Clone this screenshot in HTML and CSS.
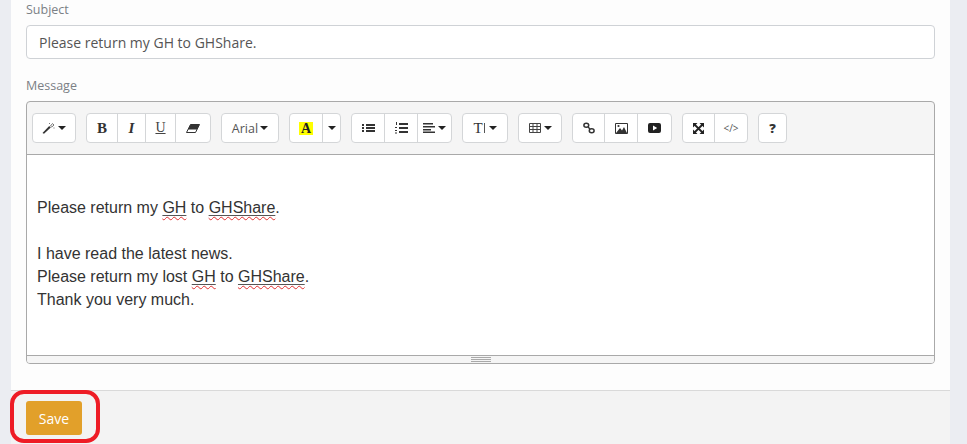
FILE: index.html
```html
<!DOCTYPE html>
<html lang="en">
<head>
<meta charset="utf-8">
<title>Message</title>
<link rel="stylesheet" href="styles.css">
</head>
<body>
<div class="card">
  <div class="card-body">
    <label class="label label-subject">Subject</label>
    <div class="input">Please return my GH to GHShare.</div>
    <label class="label label-message">Message</label>
    <div class="editor">
      <div class="toolbar">
        <div class="group"><button class="btn w42"><svg width="13" height="12" viewBox="0 0 13 12"><path d="M0.5 11 L7.200 4 L8.800 5.400 L2 11.800 Z" fill="#333"/><path d="M8.500 4 L10.500 1.500 L12 3 L9.800 5 Z" fill="none" stroke="#777" stroke-width="1"/><path d="M7 1h1v1H7zM11.500 5.500h1v1h-1z" fill="#777"/></svg><i class="caret"></i></button></div>
        <div class="group">
          <button class="btn w30 serif big bold">B</button>
          <button class="btn w28 serif big bolditalic">I</button>
          <button class="btn w30 serif under">U</button>
          <button class="btn w35"><svg width="14" height="9" viewBox="0 0 14 9"><path d="M4.500 0.500 L13.500 0.500 L9.500 8.500 L0.500 8.500 Z" fill="#fff" stroke="#333" stroke-width="1"/><path d="M4.500 0.500 L13.500 0.500 L11 5.500 L2 5.500 Z" fill="#333"/></svg></button>
        </div>
        <div class="group"><button class="btn w56 sans">Arial<i class="caret"></i></button></div>
        <div class="group">
          <button class="btn w32 serif bold"><span class="hilite">A</span></button>
          <button class="btn w18"><i class="caret"></i></button>
        </div>
        <div class="group">
          <button class="btn w32"><svg width="13" height="10" viewBox="0 0 13 10"><path d="M0 1h2v2H0zM0 4h2v2H0zM0 7h2v2H0zM4 1h9v2H4zM4 4h9v2H4zM4 7h9v2H4z" fill="#333"/></svg></button>
          <button class="btn w33"><svg width="13" height="12" viewBox="0 0 13 12"><path d="M1 0h1v3H1zM0 5h2v1H0zM0 8h2v1H0zM0 10.500h2v1H0zM4 1h9v2H4zM4 5h9v2H4zM4 9h9v2H4z" fill="#333"/></svg></button>
          <button class="btn w34"><svg width="12" height="10" viewBox="0 0 12 10"><path d="M0 0h10v1.500H0zM0 3h12v1.500H0zM0 6h8v1.500H0zM0 8.500h12V10H0z" fill="#333"/></svg><i class="caret"></i></button>
        </div>
        <div class="group"><button class="btn w44 serif size">T<span class="cursor"></span><i class="caret"></i></button></div>
        <div class="group"><button class="btn w42"><svg width="12" height="10" viewBox="0 0 12 10"><path d="M.5.500h11v9H.5zM.5 3.500h11M.5 6.500h11M4 .5v9M8 .5v9" fill="none" stroke="#444" stroke-width="1"/></svg><i class="caret"></i></button></div>
        <div class="group">
          <button class="btn w31"><svg width="12" height="12" viewBox="0 0 12 12"><g fill="none" stroke="#333" stroke-width="1.500"><ellipse cx="3.300" cy="3.300" rx="2.400" ry="2"/><ellipse cx="8.700" cy="8.700" rx="2.400" ry="2"/><path d="M5 5 L7 7"/></g></svg></button>
          <button class="btn w33"><svg width="13" height="11" viewBox="0 0 13 11"><path d="M.5.500h12v10H.5z" fill="#fff" stroke="#333"/><path d="M1 10 L5 5 L7 7.500 L9 4 L12 10 Z" fill="#333"/><circle cx="3.500" cy="3" r="1.100" fill="#333"/></svg></button>
          <button class="btn w34"><svg width="13" height="10" viewBox="0 0 13 10"><path d="M2 0H11Q13 0 13 2V8Q13 10 11 10H2Q0 10 0 8V2Q0 0 2 0ZM5 2.500V7.500L9.200 5Z" fill="#222" fill-rule="evenodd"/></svg></button>
        </div>
        <div class="group">
          <button class="btn w31"><svg width="11" height="11" viewBox="0 0 11 11"><path d="M1.500 1.500 L9.500 9.500 M9.500 1.500 L1.500 9.500" stroke="#222" stroke-width="1.800"/><path d="M0 0h4.500L0 4.500zM11 0v4.500L6.500 0zM0 11V6.500L4.500 11zM11 11H6.500L11 6.500z" fill="#222"/></svg></button>
          <button class="btn w33 code">&lt;/&gt;</button>
        </div>
        <div class="group"><button class="btn w27 help">?</button></div>
      </div>
      <div class="content">
        <p class="gap">Please return my <span class="misspelt"><span class="wavy">GH</span></span> to <span class="misspelt"><span class="wavy">GHShare</span></span>.</p>
        <p>I have read the latest news.</p>
        <p>Please return my lost <span class="misspelt"><span class="wavy">GH</span></span> to <span class="misspelt"><span class="wavy">GHShare</span></span>.</p>
        <p>Thank you very much.</p>
      </div>
      <div class="statusbar"><span class="grip"></span></div>
    </div>
  </div>
  <div class="card-footer"><button class="save">Save</button></div>
</div>
<div class="annotation"></div>
</body>
</html>
```
FILE: styles.css
```css
* { box-sizing: border-box; }
html, body { margin: 0; height: 444px; overflow: hidden; }
body { background: #ebedf2; font-family: "Open Sans", sans-serif; position: relative; }
.card { margin: 0 17px 0 11px; background: #fdfdfd; height: 444px; display: flex; flex-direction: column; }
.card-body { padding: 0 15px; height: 390px; flex: none; }
.label { display: block; font-size: 12.500px; line-height: 18px; padding-top: 1px; color: #7b8085; }
.label-subject { height: 25px; }
.label-message { margin-top: 17px; height: 25px; }
.input { height: 34px; border: 1px solid #cfd2d6; border-radius: 4px; background: #fff; padding: 0 12px; font-size: 14px; line-height: 33px; color: #555; }
.editor { height: 263px; border: 1px solid #a9a9a9; border-radius: 4px; overflow: hidden; background: #f5f5f5; display: flex; flex-direction: column; }
.toolbar { height: 53px; flex: none; display: flex; gap: 10px; align-items: flex-start; padding: 11px 0 0 5px; border-bottom: 1px solid #a9a9a9; }
.group { display: flex; height: 30px; flex: none; background: #fff; border: 1px solid #d4d6d8; border-radius: 4px; }
.btn { height: 28px; padding: 0; border: 0; background: transparent; border-left: 1px solid #d4d6d8; color: #333; display: flex; align-items: center; justify-content: center; gap: 3px; font-family: "Open Sans", sans-serif; font-size: 12px; }
.btn:first-child { border-left: 0; }
.w18 { width: 18px; } .w27 { width: 27px; } .w28 { width: 28px; } .w30 { width: 30px; }
.w31 { width: 31px; } .w32 { width: 32px; } .w33 { width: 33px; } .w34 { width: 34px; } .w35 { width: 35px; }
.w42 { width: 42px; } .w44 { width: 44px; } .w56 { width: 56px; }
.caret { display: inline-block; width: 0; height: 0; border-left: 4px solid transparent; border-right: 4px solid transparent; border-top: 4px solid #222; }
.serif { font-family: "Liberation Serif", serif; font-size: 14px; }
.big { font-size: 15px; }
.bold { font-weight: 700; }
.bolditalic { font-weight: 700; font-style: italic; }
.under { text-decoration: underline; color: #444; }
.sans { color: #555; font-size: 12.500px; gap: 2px; }
.hilite { background: #ff0; line-height: 13px; padding: 0 2px; color: #222; font-size: 14px; }
.size { color: #333; font-size: 15px; gap: 1px; }
.cursor { width: 1px; height: 10px; background: #555; margin-right: 3px; }
.code { font-size: 10px; color: #555; }
.help { font-weight: 800; font-size: 13px; color: #333; }
.content { height: 201px; flex: none; background: #fff; padding: 41px 10px 0; border-bottom: 1px solid #a9a9a9; font-family: "Liberation Sans", sans-serif; font-size: 16px; line-height: 23px; color: #333; }
.content p { margin: 0; }
.content .gap { margin-bottom: 23px; }
.misspelt { text-decoration: underline; text-decoration-color: #555; text-underline-offset: 2px; }
.wavy { text-decoration: underline wavy #e03030 1px; text-underline-offset: 3px; }
.statusbar { flex: 1; background: #f5f5f5; display: flex; justify-content: center; align-items: center; }
.grip { width: 20px; height: 5px; border-top: 1px solid #a9a9a9; border-bottom: 1px solid #a9a9a9; background: linear-gradient(#a9a9a9, #a9a9a9) center / 100% 1px no-repeat; }
.card-footer { flex: 1; background: #f3f3f3; border-top: 1px solid #d9d9d9; padding: 10px 15px; }
.save { width: 56px; height: 34px; border: 0; border-radius: 3px; background: #e2a02a; color: #fff; font-family: "Open Sans", sans-serif; font-size: 14px; padding: 0; }
.annotation { position: absolute; left: 10px; top: 390px; width: 90px; height: 53px; border: 4px solid #ee1c25; border-radius: 14px; }
```
